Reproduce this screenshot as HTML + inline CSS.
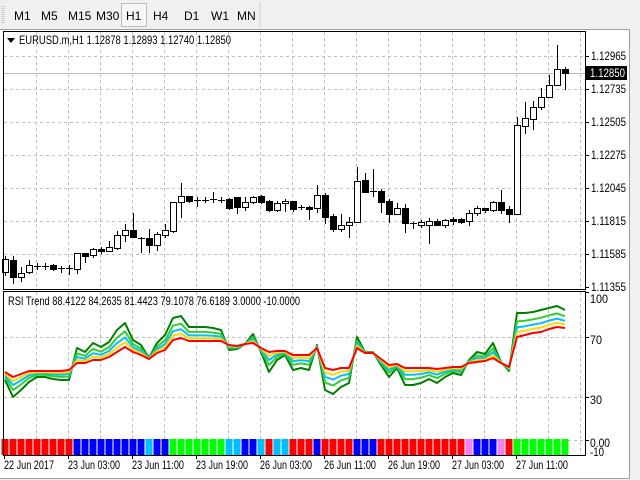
<!DOCTYPE html>
<html><head><meta charset="utf-8"><style>
body{margin:0;width:640px;height:480px;overflow:hidden;background:#f0f0f0;font-family:"Liberation Sans",sans-serif}
svg{position:absolute;left:0;top:0}
text{font-family:"Liberation Sans",sans-serif;font-size:12px}
</style></head><body>
<svg id="s" width="640" height="480" xmlns="http://www.w3.org/2000/svg">
<rect x="0" y="0" width="640" height="480" fill="#f0f0f0"/>
<line x1="2" y1="6" x2="2" y2="24" stroke="#aaa" stroke-dasharray="1,1"/>
<line x1="4" y1="6" x2="4" y2="24" stroke="#aaa" stroke-dasharray="1,1"/>
<line x1="260" y1="2" x2="260" y2="27" stroke="#ccc"/>
<rect x="121.5" y="3.5" width="25" height="23" fill="#f7f7f7" stroke="#bdbdbd"/>
<g fill="#000" style="font-size:11px">
<text x="14" y="20">M1</text><text x="41" y="20">M5</text><text x="68" y="20">M15</text><text x="96" y="20">M30</text><text x="126" y="20">H1</text><text x="153" y="20">H4</text><text x="184" y="20">D1</text><text x="211" y="20">W1</text><text x="237" y="20">MN</text>
</g>
<rect x="0" y="29" width="630" height="449" fill="#fff"/>
<line x1="0" y1="29.5" x2="630" y2="29.5" stroke="#a0a0a0"/>
<line x1="629.5" y1="29" x2="629.5" y2="478" stroke="#a0a0a0"/>
<line x1="0" y1="478.5" x2="630" y2="478.5" stroke="#a0a0a0"/>
<g id="grid" stroke="#c0c0c0" stroke-dasharray="3,3"></g>
<line x1="3" y1="73.5" x2="585" y2="73.5" stroke="#c0c0c0"/>
<g id="cand"></g>
<g id="bars"></g>
<g id="rsi" fill="none" stroke-width="2" stroke-linejoin="round"></g>
<rect x="3.5" y="31.5" width="582" height="258" fill="none" stroke="#000"/>
<rect x="3.5" y="291.5" width="582" height="164" fill="none" stroke="#000"/>
<path d="M7 38 L15 38 L11 43 Z" fill="#000"/>
<text x="19" y="44" fill="#000" textLength="212" lengthAdjust="spacingAndGlyphs">EURUSD.m,H1  1.12878 1.12893 1.12740 1.12850</text>
<text x="8" y="305" fill="#000" textLength="292" lengthAdjust="spacingAndGlyphs">RSI Trend 88.4122 84.2635 81.4423 79.1078 76.6189 3.0000 -10.0000</text>
<g id="axis" fill="#000"></g>
<rect x="586" y="66" width="41" height="14" fill="#000"/>
<text x="590" y="77" fill="#fff" textLength="35" lengthAdjust="spacingAndGlyphs">1.12850</text>
</svg>
<script>
var NS="http://www.w3.org/2000/svg";
function el(p,t,a,txt){var e=document.createElementNS(NS,t);for(var k in a)e.setAttribute(k,a[k]);if(txt)e.textContent=txt;document.getElementById(p).appendChild(e);}
for(var x=36;x<585;x+=32){el("grid","line",{x1:x+.5,y1:32,x2:x+.5,y2:289});el("grid","line",{x1:x+.5,y1:292,x2:x+.5,y2:455});}
var py=[56,89,122,155,188,221,254,287],pl=["1.12965","1.12735","1.12505","1.12275","1.12045","1.11815","1.11585","1.11355"];
py.forEach(function(y,i){if(i<7)el("grid","line",{x1:4,y1:y+.5,x2:585,y2:y+.5});el("axis","line",{x1:585,y1:y+.5,x2:589,y2:y+.5,stroke:"#000"});el("axis","text",{x:591,y:y+4,textLength:35,lengthAdjust:"spacingAndGlyphs"},pl[i]);});
[337,397,440].forEach(function(y){el("grid","line",{x1:4,y1:y+.5,x2:585,y2:y+.5});});
[[299,"100",18],[340,"70",12],[400,"30",12],[443,"0.00",20],[452,"-10",14]].forEach(function(a){el("axis","text",{x:590,y:a[0]+4,textLength:a[2],lengthAdjust:"spacingAndGlyphs"},a[1]);});
[292,337,397,440].forEach(function(y){el("axis","line",{x1:585,y1:y+.5,x2:589,y2:y+.5,stroke:"#000"});});
var tl=["22 Jun 2017","23 Jun 03:00","23 Jun 11:00","23 Jun 19:00","26 Jun 03:00","26 Jun 11:00","26 Jun 19:00","27 Jun 03:00","27 Jun 11:00"];
tl.forEach(function(t,i){var x=i==0?4:68+64*(i-1);el("axis","line",{x1:x+.5,y1:455,x2:x+.5,y2:459,stroke:"#000"});el("axis","text",{x:x,y:469,textLength:i==0?50:52,lengthAdjust:"spacingAndGlyphs"},t);});
var C=[[1,256,259,272,275],[0,256,260,277,283],[1,267,273,277,281],[1,260,265,272,273],[2,263,266,266,269],[2,263,266,266,269],[0,264,265,269,270],[2,266,268,268,272],[2,265,268,268,274],[1,253,253,269,273],[0,253,253,256,262],[1,248,249,255,257],[0,247,249,251,253],[1,241,247,251,251],[1,231,235,248,249],[1,224,230,235,241],[0,213,230,237,237],[2,237,238,238,252],[0,229,238,245,252],[1,232,234,245,250],[1,224,230,235,237],[1,202,202,231,232],[1,183,196,202,217],[0,196,196,201,202],[2,197,200,200,206],[2,197,200,200,202],[2,192,199,199,202],[2,197,200,200,202],[0,198,199,208,209],[0,197,197,207,213],[1,197,202,207,210],[1,196,197,202,203],[0,195,196,202,203],[0,200,201,210,211],[1,201,203,210,211],[1,199,201,203,211],[0,201,201,209,211],[2,205,207,207,209],[0,206,207,209,219],[1,185,195,208,212],[0,193,195,217,223],[0,214,216,229,231],[1,214,225,229,231],[1,217,222,225,237],[1,167,181,222,222],[0,173,180,192,192],[2,169,191,191,196],[0,189,191,202,212],[0,199,201,214,222],[1,203,208,214,214],[0,204,208,223,232],[2,222,223,223,228],[1,220,222,225,227],[1,218,221,225,243],[0,219,221,225,225],[1,219,220,225,227],[0,217,219,221,224],[0,218,219,222,223],[1,210,213,221,225],[1,206,208,213,215],[0,208,208,210,212],[1,201,202,210,211],[0,190,202,210,213],[0,206,209,214,222],[1,117,125,214,214],[1,102,118,126,133],[1,101,107,119,129],[1,88,97,107,109],[1,75,85,97,97],[1,45,69,85,85],[0,67,69,73,89]];
C.forEach(function(c,k){var x=5+8*k;el("cand","line",{x1:x+.5,y1:c[1],x2:x+.5,y2:c[4]+1,stroke:"#000"});
 if(c[0]==2){el("cand","line",{x1:x-3,y1:c[2]+.5,x2:x+4,y2:c[2]+.5,stroke:"#000"});}
 else{var h=Math.max(c[3]-c[2],2);el("cand","rect",{x:x-2.5,y:c[2]+.5,width:6,height:h,fill:c[0]==1?"#fff":"#000",stroke:"#000"});}});
var R="#ff0000",B="#0000ff",Cy="#00bfff",G="#00ff00",P="#ee82ee";
var col=[];function add(c,n){for(var i=0;i<n;i++)col.push(c);}
add(R,9);add(B,9);add(Cy,1);add(B,2);add(G,7);add(Cy,2);add(B,2);add(Cy,1);add(R,1);add(Cy,2);add(R,3);add(B,1);add(R,4);add(B,3);add(R,11);add(P,1);add(B,3);add(P,1);add(R,1);add(G,7);
col.forEach(function(c,k){el("bars","rect",{x:8*k+1.5,y:439,width:7,height:16,fill:c});});
var red=[372,377,374,371,371,371,371,371,370,363,363,360,360,357,352,347,352,355,359,353,350,340,338,341,341,341,341,341,345,346,344,343,348,352,351,351,355,355,355,348,368,370,368,368,348,353,353,359,365,364,368,368,368,368,369,368,367,367,363,362,361,358,363,367,337,335,333,332,329,327,328];
var dg=[380,397,390,382,377,377,379,380,380,348,352,343,347,342,330,323,340,345,358,343,335,318,316,327,327,327,328,330,350,349,344,334,352,372,360,355,370,368,370,345,390,394,387,383,337,352,352,365,377,368,385,385,383,379,383,377,373,375,360,352,354,343,362,371,313,313,312,310,308,306,310];
function pts(f){return red.map(function(r,k){return (5+8*k)+","+(r+(dg[k]-r)*f).toFixed(1);}).join(" ");}
[["#008000",1],["#32cd32",0.65],["#00bfff",0.4],["#ffd700",0.2],["#ff0000",0]].forEach(function(a){el("rsi","polyline",{points:pts(a[1]),stroke:a[0]});});
</script>
</body></html>
